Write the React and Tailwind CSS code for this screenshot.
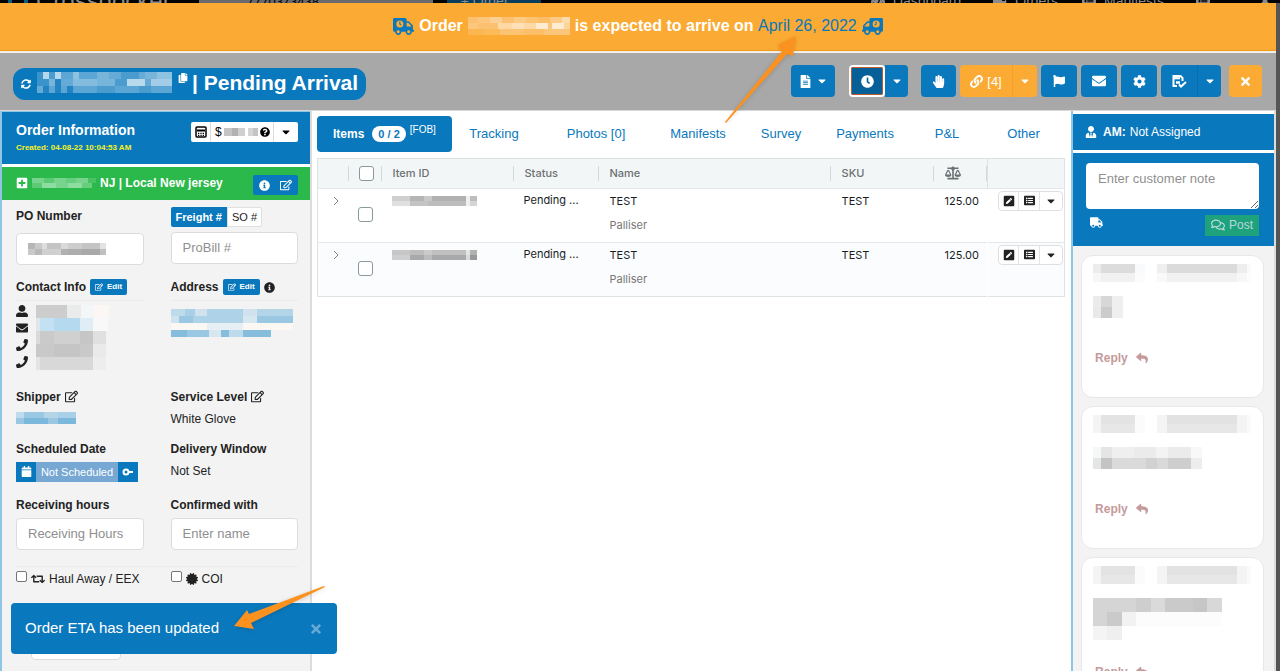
import { clsx } from 'clsx';
import {
  FaBalanceScale,
  FaCalendar,
  FaCaretDown,
  FaCertificate,
  FaClock,
  FaCog,
  FaCopy,
  FaEnvelope,
  FaFileAlt,
  FaFlag,
  FaHandPaper,
  FaInfoCircle,
  FaLink,
  FaListAlt,
  FaPenSquare,
  FaPhone,
  FaPlusSquare,
  FaQuestionCircle,
  FaRegComments,
  FaRegEdit,
  FaReply,
  FaRetweet,
  FaSyncAlt,
  FaTachometerAlt,
  FaTimes,
  FaTruck,
  FaUserAlt,
  FaUserTie,
} from 'react-icons/fa';

// Redacted values: every row is a list of [width, colour] cells
function Redacted({ rows, size, className }) {
  return (
    <span className={clsx('inline-flex flex-col', className)} aria-hidden="true">
      {rows.map((row, i) => (
        <span key={i} className="flex" style={{ height: size }}>
          {row.map(([width, color], j) => (
            <span key={j} className="shrink-0" style={{ width, backgroundColor: color }} />
          ))}
        </span>
      ))}
    </span>
  );
}

const MASKS = {
  banner: [
    [[10, '#fbc170'], [12, '#fcc67c'], [12, '#fcd092'], [12, '#fbc170'], [12, '#fcca82'], [12, '#fcc373'], [12, '#fbbd65'], [12, '#fcca84'], [8, '#fcdcab']],
    [[10, '#fcc67c'], [20, '#fbc171'], [14, '#fdd9a4'], [12, '#fde0b5'], [12, '#fdd9a5'], [12, '#feecd0'], [4, '#fcc67c'], [12, '#feecd0'], [6, '#fdd59b']],
    [[16, '#fbb64f'], [16, '#fbbb5b'], [24, '#fcc373'], [20, '#fbbf69'], [26, '#fcc67a']],
  ],
  orderId: [
    [[6, '#3a93ca'], [6, '#b5d8ec'], [6, '#4a9ccf'], [6, '#b5d8ec'], [12, '#5ba6d4'], [6, '#8ec2e1'], [18, '#5ba6d4'], [12, '#77b5db'], [12, '#65abd6'], [18, '#4a9ccf'], [6, '#65abd6'], [12, '#77b5db'], [15, '#8ec2e1']],
    [[12, '#3a93ca'], [6, '#77b5db'], [6, '#2284c3'], [12, '#65abd6'], [24, '#83bcdf'], [18, '#77b5db'], [12, '#4a9ccf'], [18, '#b9daed'], [6, '#65abd6'], [21, '#a3cde6']],
    [[6, '#65abd6'], [6, '#2284c3'], [6, '#5ba6d4'], [6, '#2284c3'], [6, '#5ba6d4'], [6, '#2284c3'], [24, '#5ba6d4'], [18, '#4a9ccf'], [24, '#5ba6d4'], [12, '#4a9ccf'], [21, '#5ba6d4']],
  ],
  money: [[[8, '#c4c4c4'], [6, '#b1b1b1'], [7, '#cfcfcf'], [3, '#fff'], [5, '#d5d5d5'], [5, '#c4c4c4']]],
  hub: [
    [[12, '#78d48c'], [10, '#5bca73'], [12, '#78d48c'], [10, '#66ce7d'], [12, '#78d48c'], [8, '#47c362']],
    [[10, '#5bca73'], [14, '#8edc9f'], [12, '#78d48c'], [14, '#8edc9f'], [10, '#66ce7d']],
  ],
  poNumber: [
    [[7, '#b7b7b7'], [7, '#c9c9c9'], [5, '#dedede'], [14, '#c4c4c4'], [7, '#d9d9d9'], [14, '#cdcdcd'], [18, '#c4c4c4'], [6, '#e2e2e2']],
    [[7, '#c9c9c9'], [7, '#b9b9b9'], [5, '#d0d0d0'], [14, '#d0d0d0'], [7, '#b1b1b1'], [14, '#adadad'], [18, '#a9a9a9'], [6, '#c0c0c0']],
  ],
  contact: [
    [[31, '#cdcdcd'], [14, '#eaebeb'], [13, '#f4f7f8'], [15, '#fcf7f4']],
    [[4, '#e1e6ea'], [14, '#c3e1f3'], [26, '#b5d9ef'], [13, '#dfedf7'], [15, '#f8f8f8']],
    [[4, '#dadada'], [14, '#cacaca'], [26, '#d0d0d0'], [13, '#c6c6c6'], [13, '#e0e0e0']],
    [[18, '#c9c9c9'], [26, '#c5c5c5'], [13, '#c9c9c9'], [13, '#eaeaea']],
    [[4, '#e4e4e4'], [53, '#d8d8d8'], [13, '#ededed']],
  ],
  address: [
    [[14, '#bedbeb'], [10, '#a9d0e6'], [12, '#cfe2ed'], [36, '#aed2e7'], [14, '#cfe2ed'], [36, '#b4d5e8']],
    [[8, '#cfe2ed'], [14, '#9ac8e2'], [50, '#aed2e7'], [14, '#d7e7f0'], [36, '#9ac8e2']],
    [[36, '#fbf8f4'], [36, '#e5eff4'], [50, '#fbf8f4']],
    [[16, '#86bddd'], [22, '#9ac8e2'], [12, '#d7e7f0'], [8, '#86bddd'], [14, '#bedbeb'], [28, '#86bddd']],
  ],
  shipper: [
    [[8, '#bedbeb'], [20, '#9ac8e2'], [14, '#b4d5e8'], [18, '#a9d0e6']],
    [[8, '#9ac8e2'], [24, '#7cb8db'], [10, '#9ac8e2'], [18, '#7cb8db']],
  ],
  itemA: [
    [[18, '#cfcfcf'], [14, '#b5b5b5'], [8, '#c9c9c9'], [34, '#b1b1b1'], [4, '#f0f0f0'], [7, '#bdbdbd']],
    [[18, '#e0e0e0'], [18, '#c4c4c4'], [38, '#bdbdbd'], [4, '#f0f0f0'], [7, '#d5d5d5']],
  ],
  itemB: [
    [[18, '#c7c7c7'], [14, '#bdbdbd'], [8, '#cacaca'], [34, '#c0c0c0'], [4, '#e5e5e5'], [7, '#b1b1b1']],
    [[18, '#cfcfcf'], [14, '#a9a9a9'], [8, '#bcbcbc'], [34, '#a9a9a9'], [4, '#dadada'], [7, '#999']],
  ],
  noteHead: [
    [[8, '#ececee'], [34, '#dcdcdc'], [10, '#f9fafb'], [12, '#fff'], [10, '#efefef'], [70, '#dbdbdb'], [10, '#eee'], [4, '#fafafa']],
    [[8, '#f7f7f7'], [34, '#f1f1f1'], [10, '#fcfcfc'], [12, '#fff'], [10, '#f9f9f9'], [70, '#f1f1f1'], [10, '#f7f7f7'], [4, '#fcfcfc']],
  ],
  noteHeadEven: [
    [[8, '#f4f4f4'], [34, '#e3e3e3'], [10, '#fbfbfb'], [12, '#fff'], [10, '#f4f4f4'], [70, '#e2e2e2'], [10, '#f4f4f4'], [4, '#fafafa']],
    [[8, '#f4f4f4'], [34, '#e7e7e7'], [10, '#fbfbfb'], [12, '#fff'], [10, '#f4f4f4'], [70, '#e7e7e7'], [10, '#f4f4f4'], [4, '#fafafa']],
  ],
  noteShort: [
    [[8, '#ebebeb'], [11, '#d7d7d7'], [11, '#efefef']],
    [[8, '#e9e9e9'], [11, '#cbcbcb'], [11, '#efefef']],
  ],
  noteLine: [
    [[8, '#f5f8f7'], [11, '#e5e5e5'], [22, '#efefef'], [22, '#ebebeb'], [12, '#f3f3f3'], [23, '#ebebeb'], [11, '#f8f8f8']],
    [[8, '#e3e6e5'], [11, '#c4c4c4'], [34, '#dadada'], [11, '#d1d1d1'], [11, '#d9d9d9'], [23, '#cecece'], [11, '#ededed']],
  ],
  noteLong: [
    [[43, '#d5d5d5'], [15, '#cecece'], [14, '#dadada'], [28, '#cacaca'], [14, '#c6c6c6'], [15, '#d8d8d8']],
    [[14, '#d5d5d5'], [15, '#cacaca'], [14, '#f2f2f2'], [86, '#fcfcfc']],
    [[14, '#f4f4f4'], [15, '#efefef']],
  ],
};

const TABS = ['Tracking', 'Photos [0]', 'Manifests', 'Survey', 'Payments', 'P&L', 'Other'];

const ITEMS = [
  { key: 1, mask: MASKS.itemA, status: 'Pending ...', name: 'TEST', vendor: 'Palliser', sku: 'TEST', weight: '125.00' },
  { key: 2, mask: MASKS.itemB, status: 'Pending ...', name: 'TEST', vendor: 'Palliser', sku: 'TEST', weight: '125.00' },
];

const NOTES = [
  { key: 1, head: MASKS.noteHead, body: MASKS.noteShort },
  { key: 2, head: MASKS.noteHeadEven, body: MASKS.noteLine },
  { key: 3, head: MASKS.noteHeadEven, body: MASKS.noteLong, tall: true },
];

function TimedTruck({ flip }) {
  return (
    <svg viewBox="0 0 640 512" className={clsx('h-[17px] w-[21px] fill-[#0a78bd]', flip && '-scale-x-100')}>
      <path d="M624 352h-16V244c0-13-5-25-14-34L494 110c-9-9-21-14-34-14h-44V48c0-26-21-48-48-48H48C21 0 0 21 0 48v320c0 26 21 48 48 48h16c0 53 43 96 96 96s96-43 96-96h128c0 53 43 96 96 96s96-43 96-96h48c9 0 16-7 16-16v-32c0-9-7-16-16-16zM160 464c-27 0-48-21-48-48s21-48 48-48 48 21 48 48-21 48-48 48zm320 0c-27 0-48-21-48-48s21-48 48-48 48 21 48 48-21 48-48 48zm80-208H416V144h44l100 100v12z" />
      <circle cx="208" cy="180" r="108" className="fill-[#fbaa33]" />
      <path d="M192 104h34v66l38 30-20 26-52-40z" />
    </svg>
  );
}

function SaveCheck() {
  return (
    <svg viewBox="0 0 16 14" className="h-[14px] w-4" fill="none" stroke="currentColor" strokeWidth="2">
      <path d="M6 12H2.500V2H9.500L11.500 4V7" />
      <path d="M3 4.200h6" strokeWidth="2.200" />
      <path d="M5 8.500h4" strokeWidth="2.500" />
      <path d="M8 10.500l2 2L15 8" />
    </svg>
  );
}

function Calculator() {
  return (
    <svg viewBox="0 0 12 12" className="size-3" fill="none" stroke="currentColor" strokeWidth="1.5">
      <rect x="1" y="1" width="10" height="10" rx="1" />
      <path d="M2 4.500h8" strokeWidth="2" />
      <path d="M3 7.300h1.300M5.400 7.300h1.300M7.700 7.300H9M3 9.300h1.300M5.400 9.300h1.300M7.700 9.300H9" strokeWidth="1.300" />
    </svg>
  );
}

function KeyDot() {
  return (
    <svg viewBox="0 0 12 8" className="h-2 w-3" fill="none" stroke="currentColor" strokeWidth="2">
      <circle cx="4" cy="4" r="2.500" />
      <path d="M6.500 4H11" />
    </svg>
  );
}

function ToolButton({ label, children, className }) {
  return (
    <button
      type="button"
      aria-label={label}
      className={clsx('flex h-8 items-center justify-center gap-1 bg-[#0a78bd] text-[13px] text-white', className)}
    >
      {children}
    </button>
  );
}

function BackgroundNav() {
  return (
    <div className="flex h-[3px] items-center overflow-hidden bg-black text-[14px] text-[#8a8a8a]">
      <span className="ml-2 size-5 rounded-full border-4 border-[#0a5d85]" />
      <span className="ml-2 text-[24px]">Crossdocker</span>
      <span className="ml-7 w-[234px] bg-[#6b6b6b] pl-12 text-[13px] text-black">7770373438</span>
      <span className="ml-3.5 w-[94px] bg-[#0b3d5c] pl-3.5">+ Order</span>
      <span className="ml-auto flex items-center gap-2"><FaTachometerAlt /> Dashboard</span>
      <span className="ml-8 flex items-center gap-2"><FaTruck /> Orders</span>
      <span className="ml-6 flex items-center gap-2"><FaListAlt /> Manifests</span>
      <span className="mr-2 ml-8 flex gap-12"><FaListAlt /><FaTimes /></span>
    </div>
  );
}

function Banner() {
  return (
    <div className="flex h-12 shrink-0 items-center justify-center gap-[5px] border-b border-[#f09a17] bg-[#fbaa33] text-[16px] font-bold text-white">
      <TimedTruck />
      <span>Order</span>
      <Redacted rows={MASKS.banner} size={6} />
      <span>
        is expected to arrive on <span className="font-normal text-[#0a78bd]">April 26, 2022</span>
      </span>
      <TimedTruck flip />
    </div>
  );
}

function Toolbar() {
  return (
    <header className="flex h-[59px] shrink-0 items-center border-t-2 border-[#f3efe9] bg-[#a8a8a8] pr-3.5 pl-[13px]">
      <h1 className="mt-1.5 flex h-8 items-center rounded-xl bg-[#0a78bd] px-2 pb-1 text-[21px] font-bold text-white">
        <FaSyncAlt className="mt-1 mr-1.5 size-2.5" />
        <Redacted rows={MASKS.orderId} size={7} />
        <FaCopy className="mb-2 ml-1.5 size-2.5" />
        <span className="ml-1">| Pending Arrival</span>
      </h1>
      <div className="ml-auto flex gap-1">
        <ToolButton label="Documents" className="mr-2.5 w-11 rounded">
          <FaFileAlt />
          <FaCaretDown className="size-3" />
        </ToolButton>
        <div className="mr-[9px] flex">
          <ToolButton label="ETA" className="w-9 rounded border-2 border-white bg-[#075f98]! outline-1 -outline-offset-3 outline-[#c05a2b]">
            <FaClock />
          </ToolButton>
          <ToolButton label="ETA options" className="w-[23px] rounded-r">
            <FaCaretDown className="size-3" />
          </ToolButton>
        </div>
        <ToolButton label="Hold" className="w-[35px] rounded">
          <FaHandPaper />
        </ToolButton>
        <div className="flex">
          <ToolButton label="Linked orders" className="w-[52px] rounded-l bg-[#fbaa33]!">
            <FaLink />
            [4]
          </ToolButton>
          <ToolButton label="Link options" className="w-[25px] rounded-r border-l border-[#f5a028] bg-[#fbaa33]!">
            <FaCaretDown className="size-3" />
          </ToolButton>
        </div>
        <ToolButton label="Flag" className="w-9 rounded">
          <FaFlag className="size-3" />
        </ToolButton>
        <ToolButton label="Email" className="w-9 rounded">
          <FaEnvelope className="size-3.5" />
        </ToolButton>
        <ToolButton label="Settings" className="w-9 rounded">
          <FaCog />
        </ToolButton>
        <div className="mr-1 flex">
          <ToolButton label="Save" className="w-9 rounded-l">
            <SaveCheck />
          </ToolButton>
          <ToolButton label="Save options" className="w-6 rounded-r border-l border-[#0a6cab]">
            <FaCaretDown className="size-3" />
          </ToolButton>
        </div>
        <ToolButton label="Close" className="w-[33px] rounded bg-[#fbaa33]!">
          <FaTimes />
        </ToolButton>
      </div>
    </header>
  );
}

const inputClass = 'h-8 w-full rounded border border-[#dcdcdc] bg-white px-[11px] text-[13px] placeholder:text-[#8f8f8f]';

function EditButton() {
  return (
    <button type="button" className="flex h-4 items-center gap-1 rounded-xs bg-[#0a78bd] px-[5px] text-[8px] font-bold text-white">
      <FaRegEdit className="size-2" />
      Edit
    </button>
  );
}

function OrderPanel() {
  return (
    <aside className="flex w-[312px] shrink-0 flex-col border-x-2 border-l-[#8fc6e6] border-r-[#dcdcdc] bg-[#f3f3f3] text-[12px] text-[#222]">
      <div className="flex h-[53px] shrink-0 justify-between border-t border-[#8fc6e6] bg-[#0a78bd] pt-2.5 pr-3 pl-3.5">
        <div>
          <h2 className="text-[14px] leading-4 font-bold text-white">Order Information</h2>
          <p className="mt-0.5 text-[8px] leading-4 font-bold text-[#f7f31a]">Created: 04-08-22 10:04:53 AM</p>
        </div>
        <div className="flex h-5 rounded-xs bg-white text-[12px] text-black">
          <button type="button" aria-label="Calculate" className="flex w-5 items-center justify-center border-r border-[#ddd]">
            <Calculator />
          </button>
          <button type="button" className="flex w-[63px] items-center gap-0.5 border-r border-[#ddd] pl-1">
            $
            <Redacted rows={MASKS.money} size={8} />
            <FaQuestionCircle className="size-2.5 shrink-0" />
          </button>
          <button type="button" aria-label="Cost options" className="flex w-6 items-center justify-center">
            <FaCaretDown />
          </button>
        </div>
      </div>

      <div className="flex h-9 shrink-0 items-center border-t-3 border-white bg-[#2cb94c] pr-3 pl-3.5 font-bold text-white">
        <FaPlusSquare className="mr-1 size-3" />
        <Redacted rows={MASKS.hub} size={5} />
        <span className="ml-1">NJ | Local New jersey</span>
        <span className="mt-1 ml-auto flex h-5 items-center gap-2.5 rounded-xs bg-[#0a78bd] px-1.5">
          <button type="button" aria-label="Hub details"><FaInfoCircle className="size-[11px]" /></button>
          <button type="button" aria-label="Edit hub"><FaRegEdit className="size-3" /></button>
        </span>
      </div>

      <div className="grid grid-cols-2 gap-x-[27px] pt-[7px] pr-3 pl-3.5 leading-[18px]">
        <div>
          <label htmlFor="po" className="block h-[26px] font-bold">PO Number</label>
          <div className="relative">
            <input id="po" className={inputClass} />
            <Redacted rows={MASKS.poNumber} size={6} className="absolute top-2.5 left-3" />
          </div>
        </div>
        <div>
          <div className="flex h-[25px] items-start">
            <button type="button" className="h-5 rounded-l-xs bg-[#0a78bd] px-[5px] text-[11px] font-bold text-white">Freight #</button>
            <button type="button" className="h-5 rounded-r-xs border border-[#e0e0e0] bg-white px-1 text-[11px]">SO #</button>
          </div>
          <input aria-label="Freight number" placeholder="ProBill #" className={inputClass} />
        </div>

        <div className="mt-3.5">
          <h3 className="flex h-[22px] items-center gap-1 border-b border-[#ececec] pb-1 font-bold">
            Contact Info <EditButton />
          </h3>
          <div className="flex gap-2 pt-1">
            <div className="flex flex-col gap-[5px]">
              <FaUserAlt className="size-3" />
              <FaEnvelope className="size-3" />
              <FaPhone className="size-3" />
              <FaPhone className="size-3" />
            </div>
            <Redacted rows={MASKS.contact} size={13} />
          </div>
        </div>
        <div className="mt-3.5">
          <h3 className="flex h-[22px] items-center gap-1 border-b border-[#ececec] pb-1 font-bold">
            Address <EditButton /> <FaInfoCircle className="size-[11px]" />
          </h3>
          <Redacted rows={MASKS.address} size={7} className="mt-2" />
        </div>

        <div className="mt-[18px]">
          <h3 className="flex items-center gap-1 font-bold">Shipper <FaRegEdit className="size-[13px]" /></h3>
          <Redacted rows={MASKS.shipper} size={6} className="mt-1.5 align-top" />
        </div>
        <div className="mt-[18px]">
          <h3 className="flex items-center gap-1 font-bold">Service Level <FaRegEdit className="size-[13px]" /></h3>
          <p className="mt-1">White Glove</p>
        </div>

        <div className="mt-3">
          <h3 className="font-bold">Scheduled Date</h3>
          <div className="mt-1 flex h-5 w-[122px] bg-[#0a78bd] text-[11px] text-white">
            <button type="button" aria-label="Pick date" className="flex w-5 items-center justify-center">
              <FaCalendar className="size-[11px]" />
            </button>
            <button type="button" className="grow bg-[#76a8d3]">Not Scheduled</button>
            <button type="button" aria-label="Lock date" className="flex w-5 items-center justify-center">
              <KeyDot />
            </button>
          </div>
        </div>
        <div className="mt-3">
          <h3 className="font-bold">Delivery Window</h3>
          <p className="mt-1">Not Set</p>
        </div>

        <div className="mt-3.5">
          <label htmlFor="hours" className="mb-1 block font-bold">Receiving hours</label>
          <input id="hours" placeholder="Receiving Hours" className={inputClass} />
        </div>
        <div className="mt-3.5">
          <label htmlFor="confirmed" className="mb-1 block font-bold">Confirmed with</label>
          <input id="confirmed" placeholder="Enter name" className={inputClass} />
        </div>
      </div>

      <div className="mt-4 mr-3 ml-3.5 grid grid-cols-2 gap-x-[27px] border-t border-[#ececec] pt-[3px] leading-[18px]">
        <label className="flex items-center gap-1 whitespace-nowrap">
          <input type="checkbox" className="mb-1 size-[11px] shrink-0 appearance-none rounded-xs border border-[#767676] bg-white" />
          <FaRetweet className="size-3.5 shrink-0" />
          Haul Away / EEX
        </label>
        <label className="flex items-center gap-1">
          <input type="checkbox" className="mb-1 size-[11px] appearance-none rounded-xs border border-[#767676] bg-white" />
          <FaCertificate className="size-3" />
          COI
        </label>
      </div>
      <input aria-label="Floor" className="mt-10 ml-[29px] h-8 w-[90px] shrink-0 rounded border border-[#dcdcdc] bg-white" />
    </aside>
  );
}

function HeaderCell({ children }) {
  return (
    <th className="p-0 text-left font-medium">
      <div className="flex h-[29px] items-center justify-between pl-[11px]">
        <span>{children}</span>
        <span className="h-[15px] w-px bg-[#d3d8da]" />
      </div>
    </th>
  );
}

const gridCheck = 'block size-[15px] appearance-none rounded-[3px] border border-[#8a9a9c] bg-white';

function ItemsTable() {
  return (
    <table className="mt-1.5 w-full table-fixed border border-[#dde2e4] font-[Inter,'Liberation_Sans',sans-serif] text-[11px] text-[#181d1f]">
      <colgroup>
        <col className="w-[31px]" />
        <col className="w-[33px]" />
        <col className="w-[132px]" />
        <col className="w-[85px]" />
        <col />
        <col className="w-[103px]" />
        <col className="w-[54px]" />
        <col className="w-[77px]" />
      </colgroup>
      <thead className="bg-[#f3f6f7] text-[#6b7173]">
        <tr>
          <HeaderCell />
          <th className="p-0">
            <div className="flex h-[29px] items-center justify-between pl-2.5">
              <input type="checkbox" aria-label="Select all" className={gridCheck} />
              <span className="h-[15px] w-px bg-[#d3d8da]" />
            </div>
          </th>
          <HeaderCell>Item ID</HeaderCell>
          <HeaderCell>Status</HeaderCell>
          <HeaderCell>Name</HeaderCell>
          <HeaderCell>SKU</HeaderCell>
          <HeaderCell><FaBalanceScale className="size-4" /></HeaderCell>
          <th className="border-l border-[#dde2e4] p-0"><span className="sr-only">Actions</span></th>
        </tr>
      </thead>
      <tbody>
        {ITEMS.map(item => (
          <tr key={item.key} className="h-[54px] border-t border-[#e2e8ec] align-top even:bg-[#fbfcfd]">
            <td className="pt-[7px] pl-[14px]">
              <button type="button" aria-label="Expand" className="block">
                <svg viewBox="0 0 8 10" className="h-2.5 w-2" fill="none" stroke="#7b8385">
                  <path d="M2 1l4 4-4 4" />
                </svg>
              </button>
            </td>
            <td className="pt-[18px] pl-[9px]">
              <input type="checkbox" aria-label={`Select item ${item.key}`} className={gridCheck} />
            </td>
            <td className="pt-[7px] pl-2.5">
              <Redacted rows={item.mask} size={5} className="align-top" />
            </td>
            <td className="pt-[3px] pl-2.5 leading-4">{item.status}</td>
            <td className="pt-1 pl-[11px] leading-4">
              <div>{item.name}</div>
              <div className="mt-2 text-[#777]">{item.vendor}</div>
            </td>
            <td className="pt-1 pl-[11px] leading-4">{item.sku}</td>
            <td className="pt-1 pl-[11px] leading-4">{item.weight}</td>
            <td className="border-l border-white pt-[2px] pl-2.5">
              <div className="flex h-5 w-[65px] rounded border border-[#dfdfdf] bg-white text-[#222]">
                <button type="button" aria-label="Edit item" className="flex w-5 items-center justify-center border-r border-[#e3e3e3]">
                  <FaPenSquare className="size-3" />
                </button>
                <button type="button" aria-label="Item details" className="flex w-[21px] items-center justify-center border-r border-[#e3e3e3]">
                  <FaListAlt className="size-[11px]" />
                </button>
                <button type="button" aria-label="Item options" className="flex grow items-center justify-center">
                  <FaCaretDown className="size-3" />
                </button>
              </div>
            </td>
          </tr>
        ))}
      </tbody>
    </table>
  );
}

function MainPanel() {
  return (
    <main className="ml-[5px] min-w-0 grow pt-[5px]">
      <nav className="grid grid-cols-[135fr_84fr_120fr_84fr_82fr_86fr_78fr_75fr] items-center pr-1 text-[13px] text-[#0a78bd]">
        <button type="button" className="flex h-9 items-center rounded bg-[#0a78bd] pl-4 font-bold text-white">
          <span className="text-[12px]">Items</span>
          <span className="ml-2 rounded-full bg-white px-1.5 text-[11px] leading-4 text-[#0a78bd]">0 / 2</span>
          <span className="mb-2 ml-1 text-[10px] font-normal">[FOB]</span>
        </button>
        {TABS.map(tab => (
          <button key={tab} type="button" className="h-9">{tab}</button>
        ))}
      </nav>
      <ItemsTable />
    </main>
  );
}

function NotesPanel() {
  return (
    <aside className="ml-1.5 flex w-[205px] shrink-0 flex-col border-x-2 border-l-[#8fc6e6] border-r-[#dcdcdc] bg-[#f3f3f3] text-white">
      <div className="flex h-[42px] shrink-0 items-center border-y-3 border-white bg-[#0a78bd] pl-3 text-[12px]">
        <FaUserTie className="mr-1.5" />
        <b className="mr-1">AM:</b> Not Assigned
      </div>
      <div className="h-[93px] shrink-0 bg-[#0a78bd] pt-2.5 pr-[15px] pl-[13px]">
        <textarea aria-label="Customer note" placeholder="Enter customer note" className="block h-[46px] w-full rounded bg-white px-3 py-2 text-[13px] leading-4 placeholder:text-[#8f8f8f]" />
        <div className="mt-1.5 flex items-start justify-between">
          <FaTruck className="mt-px ml-1 size-[13px]" />
          <button type="button" className="flex h-[21px] items-center gap-1 bg-[#1ea27c] px-1.5 text-[12px] text-[#b5d8dc]">
            <FaRegComments className="size-3.5" />
            Post
          </button>
        </div>
      </div>
      <div className="flex flex-col gap-2 pt-[9px] pr-2.5 pl-2">
        {NOTES.map(note => (
          <article key={note.key} className="flex h-[143px] shrink-0 flex-col items-start rounded-xl border border-[#e8e8e8] bg-white px-[11px] pt-2">
            <Redacted rows={note.head} size={9} />
            <Redacted rows={note.body} size={note.tall ? 14 : 11} className="mt-3.5" />
            <button
              type="button"
              className={clsx('ml-0.5 flex items-center gap-2 text-[12px] leading-4 font-bold text-[#c49a9a]', note.tall ? 'mt-6' : 'mt-8')}
            >
              Reply
              <FaReply />
            </button>
          </article>
        ))}
      </div>
    </aside>
  );
}

function Toast() {
  return (
    <div role="status" className="absolute bottom-[17px] left-[11px] flex h-[51px] w-[326px] items-center justify-between rounded bg-[#0a78bd] px-3.5 text-[15px] text-white">
      Order ETA has been updated
      <button type="button" aria-label="Dismiss"><FaTimes className="size-3.5 text-[#69a9d6]" /></button>
    </div>
  );
}

export default function App() {
  return (
    <div className="relative flex h-screen flex-col overflow-hidden bg-[#555] font-['Liberation_Sans',Arial,sans-serif]">
      <BackgroundNav />
      <div className="mr-1 flex min-h-0 grow flex-col bg-white">
        <Banner />
        <Toolbar />
        <div className="flex min-h-0 grow border-t border-[#d8d8d8]">
          <OrderPanel />
          <MainPanel />
          <NotesPanel />
        </div>
      </div>
      <Toast />

      {/* callout arrows */}
      <svg viewBox="0 0 74 88" className="absolute top-9 left-[724px] h-[88px] w-[74px] fill-[#fb9220] drop-shadow-sm">
        <path d="M1 86L58 15 54 9 72 0 69 20 63 18 2 87z" />
      </svg>
      <svg viewBox="0 0 92 46" className="absolute bottom-[40px] left-[234px] h-[46px] w-[92px] fill-[#fb9220] drop-shadow-sm">
        <path d="M90 1L15 29 13 25 0 41 20 44 17 38 91 2z" />
      </svg>
    </div>
  );
}
